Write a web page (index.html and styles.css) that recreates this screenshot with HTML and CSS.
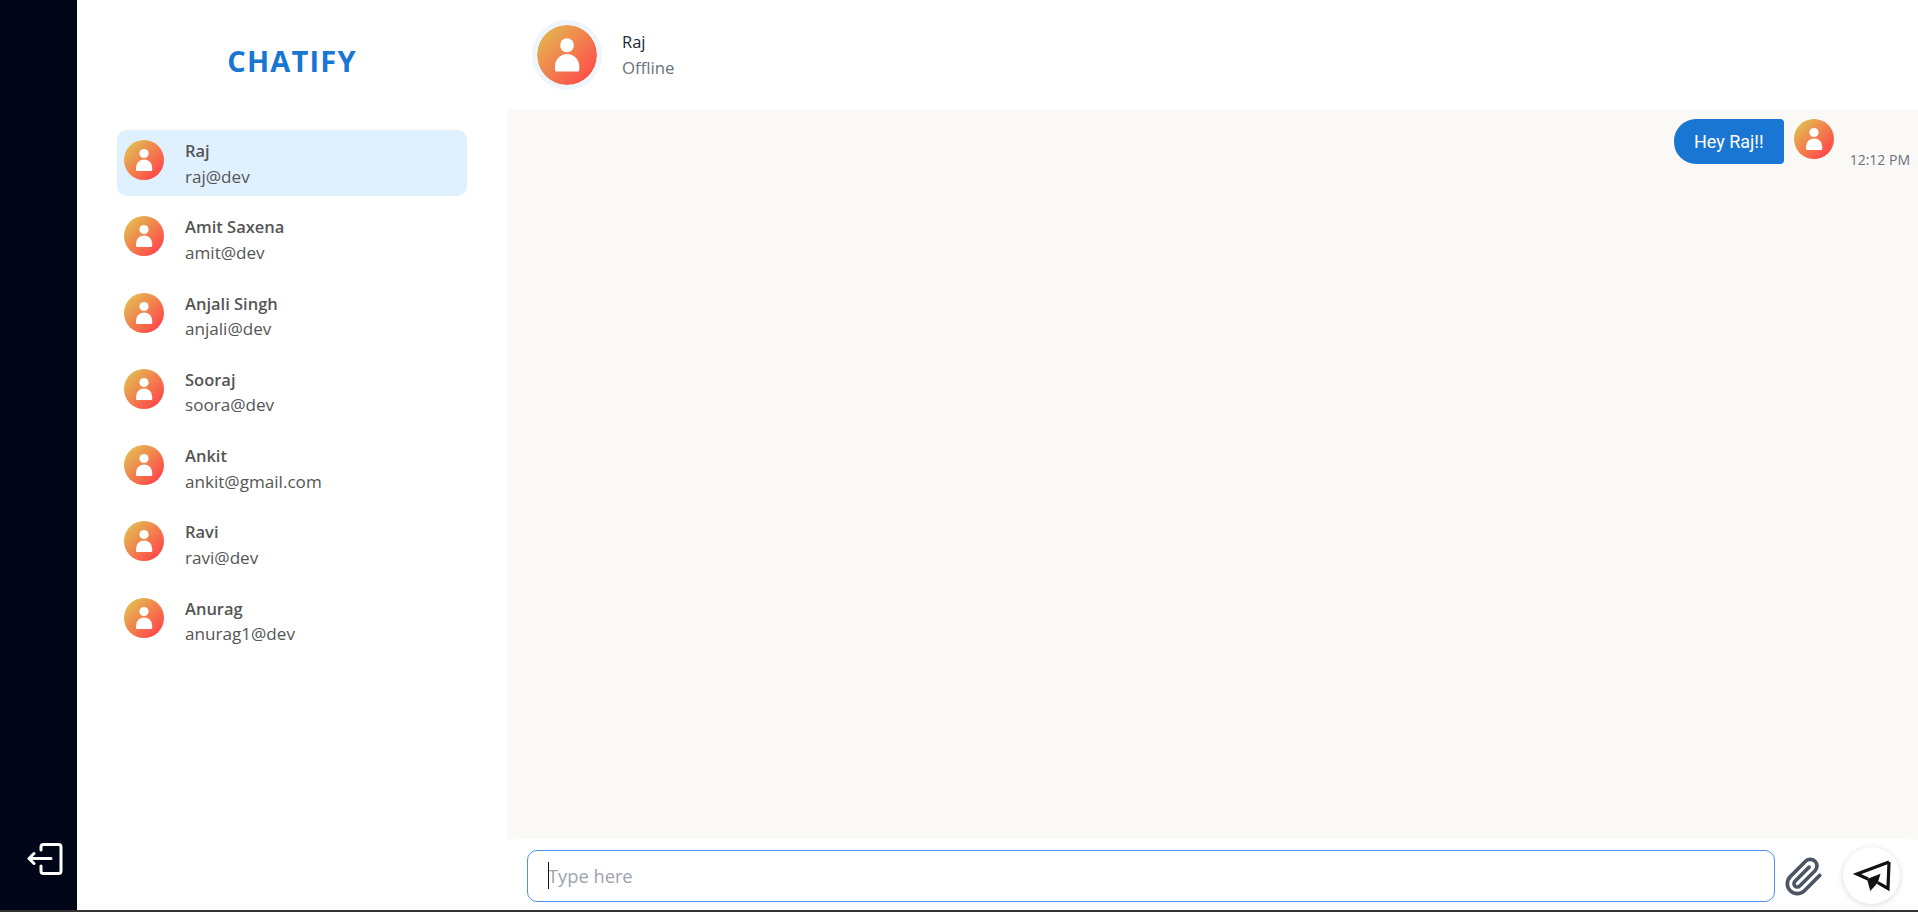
FILE: index.html
```html
<!DOCTYPE html>
<html>
<head>
	<title>Chatify</title>
	<link rel="stylesheet" href="styles.css">
</head>
<body>
	<svg class="defs" width="0" height="0">
		<symbol id="person" viewBox="0 0 40 40">
			<circle cx="20" cy="13.500" r="4.600" fill="#fff"/>
			<path d="M12 30v-2.500a8 8 0 0 1 16.200 0V30a1 1 0 0 1-1 1H13a1 1 0 0 1-1-1z" fill="#fff"/>
		</symbol>
	</svg>
	<div class="app">
		<nav class="rail">
			<svg class="logout" width="36" height="32" viewBox="0 0 36 32" fill="none" stroke="#fff" stroke-width="3" stroke-linecap="round" stroke-linejoin="round">
				<path d="M14 7V4a2.500 2.500 0 0 1 2.500-2.500h15A2.500 2.500 0 0 1 34 4v24a2.500 2.500 0 0 1-2.500 2.500h-15A2.500 2.500 0 0 1 14 28v-5"/>
				<path d="M24 15.500H2M7 10.500l-5 5 5 5"/>
			</svg>
		</nav>
		<aside class="sidebar">
			<h1 class="brand">CHATIFY</h1>
			<ul class="users">
				<li class="user selected">
					<span class="avatar"><svg width="40" height="40"><use href="#person"/></svg></span>
					<div><div class="user-name">Raj</div><div class="user-mail">raj@dev</div></div>
				</li>
				<li class="user">
					<span class="avatar"><svg width="40" height="40"><use href="#person"/></svg></span>
					<div><div class="user-name">Amit Saxena</div><div class="user-mail">amit@dev</div></div>
				</li>
				<li class="user">
					<span class="avatar"><svg width="40" height="40"><use href="#person"/></svg></span>
					<div><div class="user-name">Anjali Singh</div><div class="user-mail">anjali@dev</div></div>
				</li>
				<li class="user">
					<span class="avatar"><svg width="40" height="40"><use href="#person"/></svg></span>
					<div><div class="user-name">Sooraj</div><div class="user-mail">soora@dev</div></div>
				</li>
				<li class="user">
					<span class="avatar"><svg width="40" height="40"><use href="#person"/></svg></span>
					<div><div class="user-name">Ankit</div><div class="user-mail">ankit@gmail.com</div></div>
				</li>
				<li class="user">
					<span class="avatar"><svg width="40" height="40"><use href="#person"/></svg></span>
					<div><div class="user-name">Ravi</div><div class="user-mail">ravi@dev</div></div>
				</li>
				<li class="user">
					<span class="avatar"><svg width="40" height="40"><use href="#person"/></svg></span>
					<div><div class="user-name">Anurag</div><div class="user-mail">anurag1@dev</div></div>
				</li>
			</ul>
		</aside>
		<main class="chat">
			<header class="chat-head">
				<span class="avatar avatar-big"><svg width="60" height="60"><use href="#person"/></svg></span>
				<div>
					<div class="head-name">Raj</div>
					<div class="head-status">Offline</div>
				</div>
			</header>
			<section class="messages">
				<div class="message">
					<div class="bubble">Hey Raj!!</div>
					<span class="avatar"><svg width="40" height="40"><use href="#person"/></svg></span>
					<div class="time">12:12 PM</div>
				</div>
			</section>
			<form class="composer">
				<div class="input-wrap">
					<input class="input" type="text" placeholder="Type here">
					<span class="caret"></span>
				</div>
				<svg class="clip" width="40" height="40" viewBox="0 0 24 24" fill="none" stroke="#4b5563" stroke-width="2.200" stroke-linecap="round" stroke-linejoin="round">
					<path d="M21.440 11.050l-9.190 9.190a6 6 0 0 1-8.490-8.490l9.190-9.190a4 4 0 0 1 5.660 5.660l-9.200 9.190a2 2 0 0 1-2.830-2.830l8.490-8.480"/>
				</svg>
				<button class="send" type="button">
					<svg width="38" height="34" viewBox="0 0 38 34" fill="none" stroke="#111" stroke-width="3.200" stroke-linejoin="miter">
						<path d="M36 3 4 15l11 5"/>
						<path d="M24.700 23.700 35 29.500 36 3"/>
						<path d="M14 20 27.500 14.700 24.700 23.700 17.300 32z" fill="#111" stroke="none"/>
					</svg>
				</button>
			</form>
		</main>
	</div>
</body>
</html>
```

FILE: styles.css
```css
* {
	box-sizing: border-box;
}
html, body {
	margin: 0;
	height: 100%;
	overflow: hidden;
}
body {
	font-family: "Open Sans", "Noto Sans", sans-serif;
	background: #fff;
}
.defs {
	position: absolute;
}
.app {
	display: flex;
	height: 912px;
	border-bottom: 2px solid #333;
}
.rail {
	width: 77px;
	flex: none;
	background: #000518;
	display: flex;
	align-items: flex-end;
	padding: 0 0 35px 27px;
}
.sidebar {
	width: 430px;
	flex: none;
	padding: 0 40px;
}
.brand {
	margin: 0;
	height: 130px;
	padding-top: 42px;
	text-align: center;
	color: #1976d2;
	font-size: 29px;
	line-height: 38px;
	letter-spacing: 1.200px;
	font-weight: 700;
}
.users {
	list-style: none;
	margin: 0;
	padding: 0;
}
.user {
	display: flex;
	gap: 21px;
	height: 66px;
	margin-bottom: 10.300px;
	padding: 9px 7px;
	border-radius: 10px;
	color: #555;
}
.selected {
	background: #dff0ff;
}
.avatar {
	flex: none;
	display: block;
	width: 40px;
	height: 40px;
	margin-top: 1px;
	border-radius: 50%;
	background: linear-gradient(135deg, #e4b650 15%, #ff4a4a 85%);
}
.avatar svg {
	display: block;
}
.user-name {
	font-size: 16.500px;
	font-weight: 600;
	line-height: 24.500px;
}
.user-mail {
	font-size: 17.100px;
	line-height: 25px;
}
.chat {
	flex: 1;
	display: flex;
	flex-direction: column;
	min-width: 0;
}
.chat-head {
	height: 109px;
	flex: none;
	display: flex;
	align-items: center;
	gap: 20px;
	padding-left: 25px;
}
.avatar-big {
	width: 70px;
	height: 70px;
	margin-top: 0;
	border: 5px solid #eef6fd;
	background-origin: border-box;
	background-clip: padding-box;
}
.head-name {
	padding-bottom: 1px;
	font-size: 16.500px;
	line-height: 25px;
	color: #1f2937;
}
.head-status {
	font-size: 16.800px;
	line-height: 25px;
	color: #6b7280;
}
.messages {
	flex: 1;
	background: #faf9f6;
	padding: 10px 9px 0 0;
}
.message {
	display: flex;
	justify-content: flex-end;
	gap: 10px;
}
.bubble {
	height: 45px;
	padding: 0 20px;
	background: #1976d2;
	color: #fff;
	font-family: Roboto, sans-serif;
	font-size: 18px;
	line-height: 45px;
	border-radius: 22px 4px 4px 22px;
}
.message .avatar {
	margin-top: 0;
}
.time {
	margin: 31px -1px 0 6px;
	font-size: 14px;
	line-height: 20px;
	color: #6b7280;
}
.composer {
	height: 71px;
	flex: none;
	display: flex;
	align-items: center;
	padding: 2px 18px 0 20px;
	background: #fff;
	border-top-left-radius: 10px;
	border-top-right-radius: 10px;
	margin-top: -1px;
}
.input-wrap {
	position: relative;
	width: 1248px;
	flex: none;
}
.input {
	display: block;
	width: 100%;
	height: 52px;
	padding: 0 20px;
	border: 1px solid #4f8ff0;
	border-radius: 10px;
	outline: none;
	font-family: inherit;
	font-size: 18.300px;
}
.input::placeholder {
	color: #9ca3af;
}
.caret {
	position: absolute;
	left: 21px;
	top: 12px;
	width: 1px;
	height: 27px;
	background: #111;
}
.clip {
	margin: 3px 0 0 9px;
	flex: none;
}
.send {
	margin-left: 19px;
	width: 57px;
	height: 57px;
	flex: none;
	display: flex;
	align-items: center;
	justify-content: center;
	padding: 0;
	border: none;
	border-radius: 50%;
	background: #fff;
	box-shadow: 0 1px 6px rgba(0, 0, 0, 0.15);
}
```
